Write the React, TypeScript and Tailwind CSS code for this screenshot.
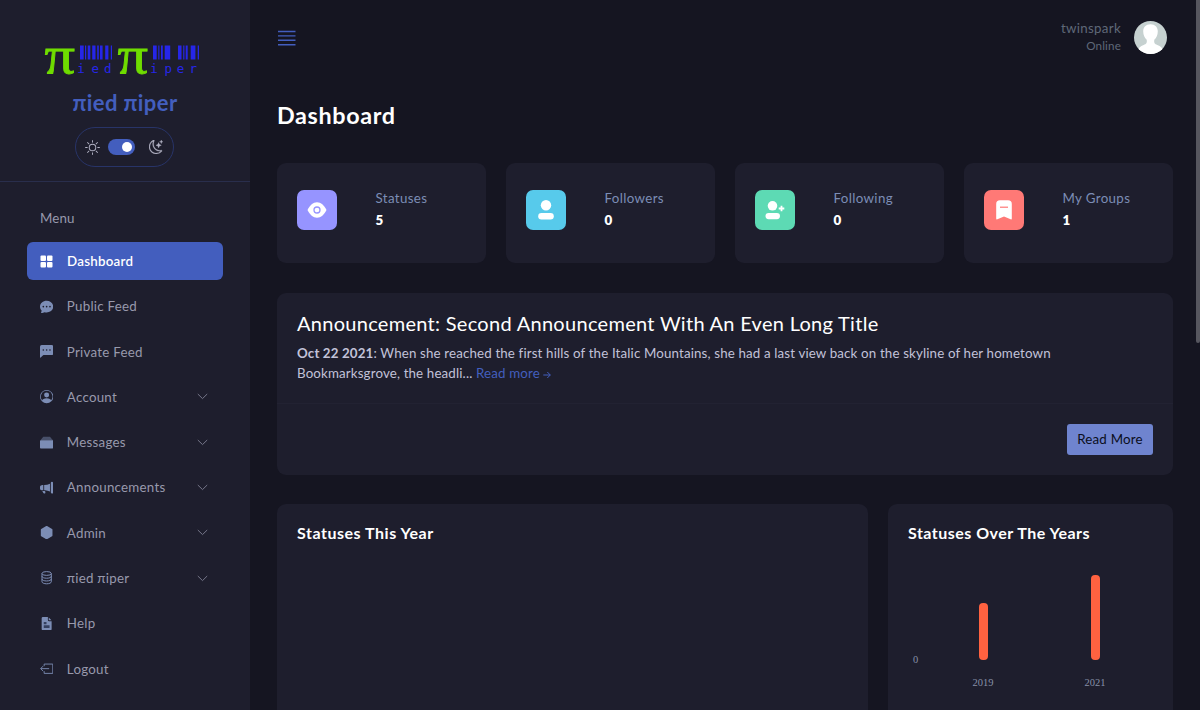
import type { ReactNode } from "react";
import {
  BsGridFill, BsChatDotsFill, BsChatLeftDotsFill, BsPersonCircle, BsMegaphoneFill,
  BsHexagonFill, BsSun, BsMoonStars,
} from "react-icons/bs";

const StackIcon = () => (
  <svg viewBox="0 0 16 16" className="size-full" fill="currentColor">
    <path d="M4 .8h8L15.500 5H.5z" opacity=".45" />
    <rect x="0" y="5" width="16" height="10" rx="1" />
  </svg>
);
const DatabaseIcon = () => (
  <svg viewBox="0 0 16 16" className="size-full" fill="none" stroke="currentColor" strokeWidth="1.2">
    <ellipse cx="8" cy="3" rx="5.600" ry="2.300" />
    <path d="M2.400 3v10c0 1.300 2.500 2.400 5.600 2.400s5.600-1.100 5.600-2.400V3M2.400 6.400c0 1.300 2.500 2.300 5.600 2.300s5.600-1 5.600-2.300M2.400 9.700c0 1.300 2.500 2.300 5.600 2.300s5.600-1 5.600-2.300" />
  </svg>
);
const FileIcon = () => (
  <svg viewBox="0 0 16 16" className="size-full">
    <path d="M3.500 0H9.500v3.500A1.500 1.500 0 0 0 11 5h3v9.500a1.500 1.500 0 0 1-1.500 1.500h-9A1.500 1.500 0 0 1 2 14.500v-13A1.500 1.500 0 0 1 3.500 0zM10.500.7V3.500q0 .5.500.5h2.800z" fill="currentColor" />
    <path d="M4.500 6h3.300v2.600H4.500zM4.500 10h7v3.200h-7z" fill="#35405f" />
  </svg>
);
const LogoutIcon = () => (
  <svg viewBox="0 0 16 16" className="size-full" fill="none" stroke="currentColor" strokeWidth="1.1">
    <path d="M5 5V2.5h10.400v11.200H5V11M11 8H1M3.700 5 .8 8l2.900 3" />
  </svg>
);

const strips: [number, number][] = [
  [39, 3.700], [44, 1.200], [46.700, 2.600], [51.200, 3.300], [56.200, 1.600], [59, 2.600], [64.200, 3.200], [69.800, 1.200],
  [112, 3.700], [117.300, 1.100], [120, 1.800], [123.700, 5.500],
  [137, 3.500], [142.200, 1.200], [144.700, 2], [149.700, 4.700], [156.700, 1.300],
];

const Logo = () => (
  <svg width="160" height="36" viewBox="0 0 160 36" className="block overflow-visible">
    <g fill="#6fdc00" fontFamily="'Liberation Serif', serif" fontSize="52.500" stroke="#6fdc00" strokeWidth="0.8">
      <text x="3.600" y="32.800" textLength="30.500" lengthAdjust="spacingAndGlyphs">π</text>
      <text x="76.600" y="32.800" textLength="30.500" lengthAdjust="spacingAndGlyphs">π</text>
    </g>
    {strips.map(([x, w]) => <rect key={x} x={x} y="5.500" width={w} height="14" fill="#2626e8" />)}
    <g fill="#2626e8" fontFamily="'DejaVu Sans Mono', monospace" fontSize="12.500">
      <text y="33" x="36.200 50.500 63">ied</text>
      <text y="33" x="109.200 123.500 135.700 148.500">iper</text>
    </g>
  </svg>
);

const nav: { label: string; icon: ReactNode; down?: boolean }[] = [
  { label: "Public Feed", icon: <BsChatDotsFill className="size-full" /> },
  { label: "Private Feed", icon: <BsChatLeftDotsFill className="size-full" /> },
  { label: "Account", icon: <BsPersonCircle className="size-full" />, down: true },
  { label: "Messages", icon: <StackIcon />, down: true },
  { label: "Announcements", icon: <BsMegaphoneFill className="size-full" />, down: true },
  { label: "Admin", icon: <BsHexagonFill className="size-full" />, down: true },
  { label: "πied πiper", icon: <DatabaseIcon />, down: true },
  { label: "Help", icon: <FileIcon /> },
  { label: "Logout", icon: <LogoutIcon /> },
];

const stats = [
  {
    label: "Statuses", value: "5", bg: "bg-[#9694ff]",
    icon: (
      <>
        <path d="M.5 10C3 5.200 6 2.300 10 2.300S17 5.200 19.500 10C17 14.800 14 17.700 10 17.700S3 14.800.5 10z" fill="#fff" />
        <circle cx="10" cy="10" r="3" fill="#fff" stroke="#9694ff" strokeWidth="1.300" />
      </>
    ),
  },
  {
    label: "Followers", value: "0", bg: "bg-[#57caeb]",
    icon: (
      <>
        <circle cx="10" cy="5.300" r="5.200" fill="#fff" />
        <rect x="2.200" y="13" width="15.600" height="6.400" rx="3.200" fill="#fff" />
      </>
    ),
  },
  {
    label: "Following", value: "0", bg: "bg-[#5ddab4]",
    icon: (
      <>
        <circle cx="7.500" cy="5.800" r="4.800" fill="#fff" />
        <rect x=".5" y="13" width="14.500" height="6.200" rx="3.100" fill="#fff" />
        <path d="M16.500 5.700v5.600M13.700 8.500h5.600" stroke="#fff" strokeWidth="1.800" />
      </>
    ),
  },
  {
    label: "My Groups", value: "1", bg: "bg-[#ff7976]",
    icon: (
      <>
        <path d="M2.200 4Q2.200.300 6 .300h8q3.800 0 3.800 3.700v14.600q0 1.200-1.200.700L10 16.500l-6.600 2.800q-1.200.500-1.200-.700z" fill="#fff" />
        <path d="M6 7.200h8" stroke="#ff7976" strokeWidth="1.200" />
      </>
    ),
  },
];

const Sidebar = () => (
  <aside className="flex h-full w-[250px] shrink-0 flex-col bg-[#1e1e2d]">
    <header className="flex h-[182px] shrink-0 flex-col items-center border-b border-[#292e4c] pt-[40px]">
      <div className="pr-[8px]"><Logo /></div>
      <div className="mt-[13px] text-[22px] leading-[28px] font-bold tracking-[0.4px] text-[#435ebe]">πied πiper</div>
      <div className="mt-[10px] mr-px flex h-10 w-[99px] items-center rounded-full border-[1.5px] border-[#283468] pl-[9px] text-[#b4b4c6]">
        <BsSun className="size-[15px]" />
        <span className="ml-[8px] flex h-4 w-[27px] items-center justify-end rounded-full bg-[#435ebe] pr-[3px]">
          <span className="size-[10px] rounded-full bg-white" />
        </span>
        <BsMoonStars className="ml-[14px] size-[14px]" strokeWidth="0.3" />
      </div>
    </header>
    <nav className="flex flex-col px-[27px] pt-[26px] text-[13.33px] leading-[20px] font-normal text-[#9899ac]">
      <div className="pl-[13px] tracking-[0.1px]">Menu</div>
      <div className="mt-[14px] flex h-[38px] items-center rounded-[6px] bg-[#435ebe] pl-[13px] font-semibold text-white">
        <svg width="13" height="13" viewBox="0 0 13 13" fill="currentColor" className="shrink-0">
          <rect x=".5" y=".5" width="5.500" height="5.500" rx="1" />
          <rect x="7" y=".5" width="5.500" height="5.500" rx="1" />
          <rect x=".5" y="7" width="5.500" height="5.500" rx="1" />
          <rect x="7" y="7" width="5.500" height="5.500" rx="1" />
        </svg>
        <span className="ml-[14px] tracking-[0.25px]">Dashboard</span>
      </div>
      {nav.map((n) => (
        <div key={n.label} className="mt-[7.300px] flex h-[38px] items-center pr-[15px] pl-[13px]">
          <span className="size-[13.300px] text-[#7c8db5]">{n.icon}</span>
          <span className="ml-[13.500px] flex-1 tracking-[0.25px]">{n.label}</span>
          {n.down && (
            <svg width="11" height="7" viewBox="0 0 11 7" fill="none" stroke="#76778a" strokeWidth="1">
              <path d="m.8 1 4.700 4.600L10.200 1" />
            </svg>
          )}
        </div>
      ))}
    </nav>
  </aside>
);

const years = [
  { year: "2019", bar: "h-[57px]" },
  { year: "2021", bar: "h-[85px]" },
];

export default function App() {
  return (
    <div className="flex h-[710px] w-[1200px] overflow-hidden bg-[#151521] font-[Lato,'Noto_Sans',sans-serif]">
      <Sidebar />
      <main className="flex min-w-0 flex-1 flex-col pl-[27px]">
        <div className="flex h-[76px] shrink-0 items-center justify-between pr-[28px]">
          <svg width="20" height="16" viewBox="0 0 20 16" stroke="#435ebe" strokeWidth="1.400">
            <path d="M1 1.500h17.500M1 5.900h17.500M1 10.300h17.500M1 14.700h17.500" />
          </svg>
          <div className="-mt-[2px] flex items-center">
            <div className="text-right text-[#5f6878]">
              <div className="text-[13.33px] leading-[16px] tracking-[0.3px]">twinspark</div>
              <div className="text-[11.67px] leading-[18px] tracking-[0.15px]">Online</div>
            </div>
            <svg width="33" height="33" viewBox="0 0 33 33" className="ml-[13px]">
              <defs><clipPath id="avatar"><circle cx="16.500" cy="16.500" r="16.500" /></clipPath></defs>
              <g clipPath="url(#avatar)">
                <rect width="33" height="33" fill="#c6d1d0" />
                <path d="M16.500 3.200c-4.600 0-7.300 2.900-7.300 7 0 4 1.500 6.500 3.500 8.500.5 3.300-.4 4.200-3 5.200C6.500 25 4 26.500 3 33h27c-1-6.500-3.500-8-6.700-9.100-2.600-1-3.500-1.900-3-5.200 2-2 3.500-4.500 3.500-8.500 0-4.100-2.700-7-7.300-7z" fill="#fff" />
              </g>
            </svg>
          </div>
        </div>
        <h1 className="mt-[25px] text-[23.33px] leading-[28px] font-bold tracking-[0.65px] text-white">Dashboard</h1>
        <div className="mt-[34px] flex gap-[20px]">
          {stats.map((s) => (
            <section key={s.label} className="flex h-[100px] w-[209px] shrink-0 rounded-[9px] bg-[#1e1e2d] pt-[26.500px] pl-[20px]">
              <div className={"flex size-[40px] items-center justify-center rounded-[7px] " + s.bg}>
                <svg width="20" height="20" viewBox="0 0 20 20">{s.icon}</svg>
              </div>
              <div className="ml-[38.500px] text-[13.33px] leading-[20px]">
                <div className="-mt-[2px] tracking-[0.35px] text-[#7c8db5]">{s.label}</div>
                <div className="mt-[2px] font-extrabold text-white">{s.value}</div>
              </div>
            </section>
          ))}
        </div>
        <section className="mt-[30px] flex h-[182px] w-[896px] shrink-0 flex-col rounded-[9px] bg-[#1e1e2d]">
          <div className="h-[111px] border-b border-[#222232] px-[20px] pt-[18px]">
            <h2 className="text-[20px] leading-[24px] tracking-[0.29px] text-white">Announcement: Second Announcement With An Even Long Title</h2>
            <p className="mt-[8px] text-[13.33px] leading-[20px] tracking-[0.14px] text-[#c2c2d9]">
              <b>Oct 22 2021</b>: When she reached the first hills of the Italic Mountains, she had a last view back on the skyline of her hometown<br />
              Bookmarksgrove, the headli... <a className="text-[#435ebe]">Read more <svg width="8" height="8" viewBox="0 0 8 8" className="inline" fill="none" stroke="currentColor"><path d="M.3 4h7M4.300 1l3 3-3 3" /></svg></a>
            </p>
          </div>
          <div className="flex justify-end pt-[20px] pr-[20px]">
            <button className="h-[31px] w-[86px] rounded-[3px] bg-[#6f84cf] text-[13.33px] tracking-[0.2px] text-[#0b0e1c]">Read More</button>
          </div>
        </section>
        <div className="mt-[29px] flex gap-[20px]">
          <section className="h-[240px] w-[591px] rounded-[9px] bg-[#1e1e2d] px-[20px] pt-[19px]">
            <h3 className="text-[16px] leading-[20px] font-bold tracking-[0.52px] text-white">Statuses This Year</h3>
          </section>
          <section className="flex h-[240px] w-[285px] flex-col rounded-[9px] bg-[#1e1e2d] px-[20px] pt-[19px]">
            <h3 className="text-[16px] leading-[20px] font-bold tracking-[0.48px] text-white">Statuses Over The Years</h3>
            <div className="mt-[32px] flex h-[85px] items-end font-['Liberation_Serif',serif] text-[10.500px] text-[#8790a8]">
              <span className="w-[19px] pl-[5px] leading-[0px]">0</span>
              <div className="flex items-end">
                {years.map((y) => (
                  <div key={y.year} className="flex w-[112px] flex-col items-center">
                    <div className={"w-[9px] rounded-[4px] bg-[#ff6240] " + y.bar} />
                    <span className="-mb-[29px] pt-[17px] leading-[12px]">{y.year}</span>
                  </div>
                ))}
              </div>
            </div>
          </section>
        </div>
      </main>
      <div className="flex w-[5px] shrink-0 justify-end">
        <div className="h-[343px] w-[4px] rounded-b-[2px] bg-[#56565f]" />
      </div>
    </div>
  );
}
